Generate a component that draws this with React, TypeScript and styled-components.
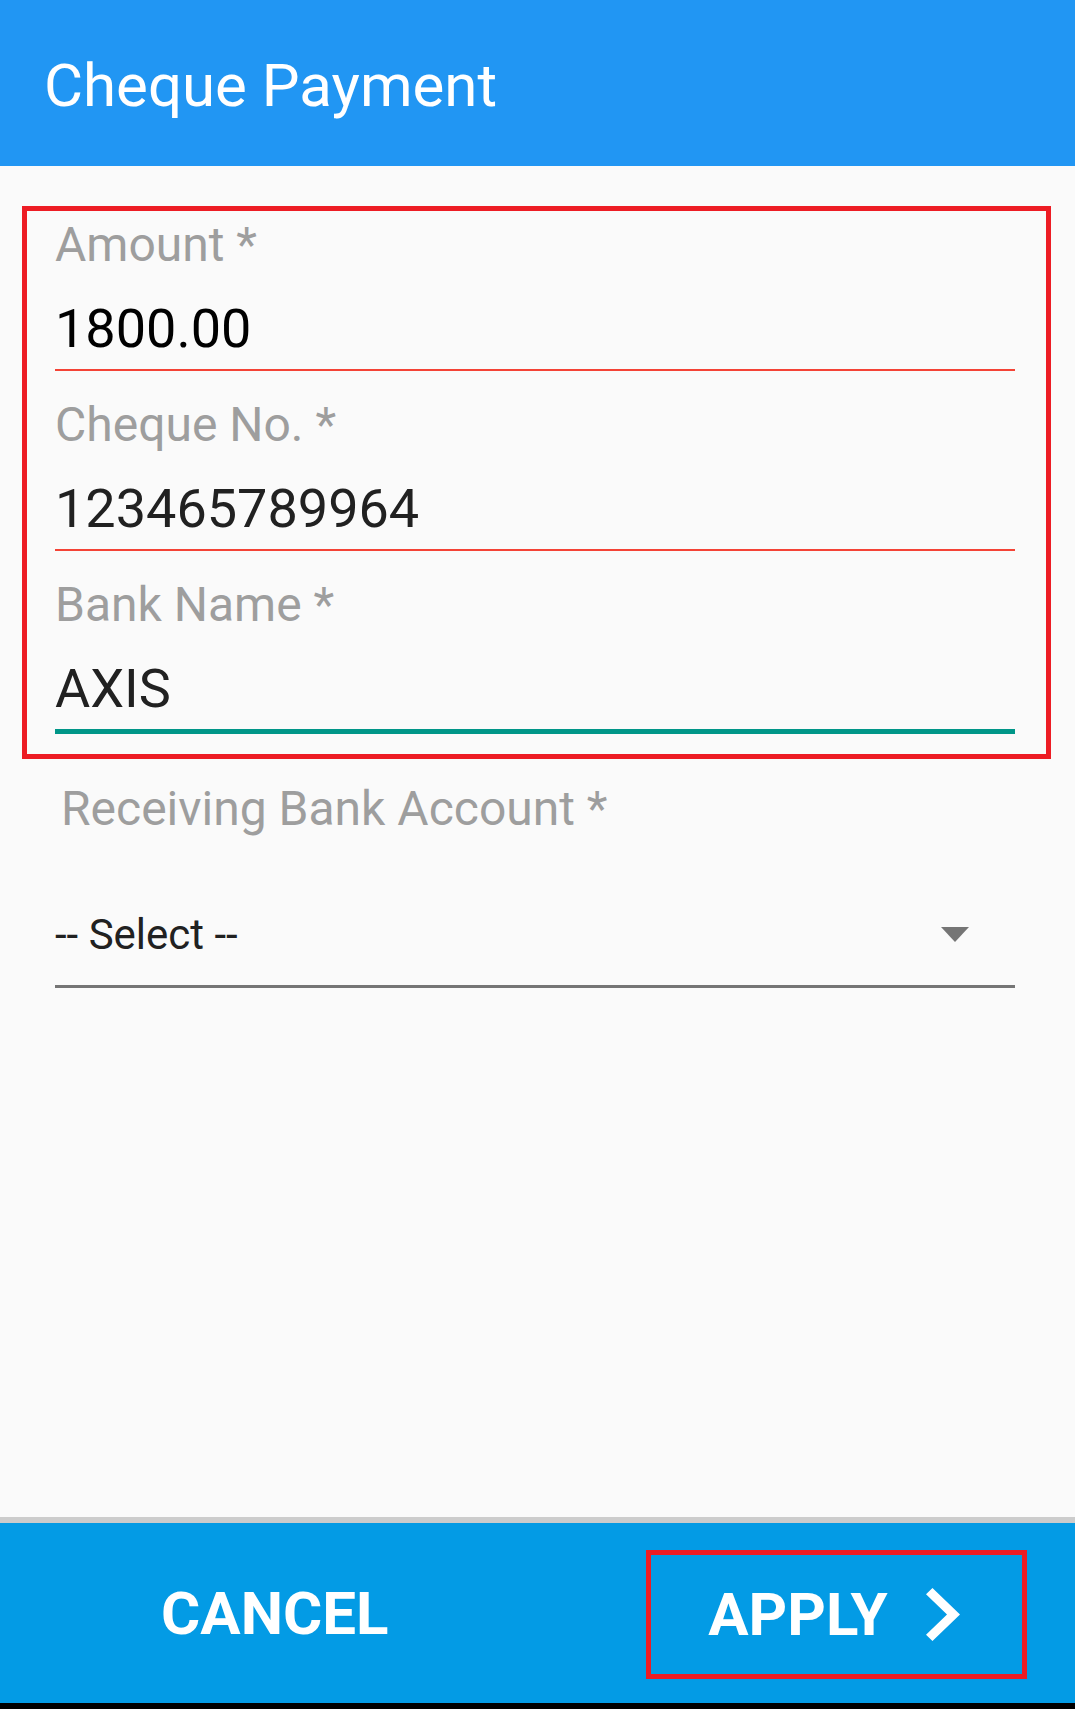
import React from "react";
import styled, { createGlobalStyle } from "styled-components";

const GlobalStyle = createGlobalStyle`
  html, body {
    margin: 0;
    padding: 0;
    background: #fafafa;
  }
  body {
    font-family: Roboto, "Noto Sans", "Liberation Sans", sans-serif;
  }
`;

const Screen = styled.div`
  display: flex;
  flex-direction: column;
  height: 1709px;
  background: #fafafa;
`;

const Header = styled.header`
  display: flex;
  align-items: center;
  height: 166px;
  padding: 5px 0 0 44px;
  box-sizing: border-box;
  background: #2196f3;
  color: #ffffff;
  font-size: 60px;
  line-height: 70px;
`;

const Body = styled.main`
  flex: 1;
  padding-top: 40px;
`;

const Highlight = styled.section`
  display: flex;
  flex-direction: column;
  gap: 20px;
  margin: 0 24px 0 22px;
  padding: 0 31px 20px 28px;
  border: 5px solid #ed1c24;
`;

const Field = styled.div`
  display: flex;
  flex-direction: column;
  padding-top: 6px;
`;

const Label = styled.label`
  font-size: 48px;
  line-height: 56px;
  color: #9e9e9e;
`;

const Value = styled.div<{ $dark?: boolean }>`
  margin-top: 24px;
  font-size: 54px;
  line-height: 64px;
  color: ${({ $dark }) => ($dark ? "#000000" : "#212121")};
`;

const Underline = styled.div<{ $focused?: boolean }>`
  margin-top: 8px;
  height: ${({ $focused }) => ($focused ? "5px" : "2px")};
  background: ${({ $focused }) => ($focused ? "#009688" : "#f44336")};
`;

const SelectSection = styled.section`
  display: flex;
  flex-direction: column;
  padding: 22px 60px 0 55px;
`;

const SelectLabel = styled(Label)`
  margin-left: 6px;
`;

const SelectRow = styled.div`
  display: flex;
  align-items: center;
  justify-content: space-between;
  height: 90px;
  margin-top: 52px;
  padding-right: 46px;
  font-size: 42px;
  color: #212121;
`;

const Caret = styled.span`
  width: 0;
  height: 0;
  border-left: 14.5px solid transparent;
  border-right: 14.5px solid transparent;
  border-top: 15px solid #757575;
`;

const SelectLine = styled.div`
  margin-top: 6px;
  height: 3px;
  background: #757575;
`;

const Divider = styled.div`
  height: 6px;
  background: #cccccc;
`;

const BottomBar = styled.footer`
  display: grid;
  grid-template-columns: 1fr 1fr;
  align-items: center;
  height: 180px;
  background: #039be5;
`;

const ActionButton = styled.button<{ $outlined?: boolean }>`
  display: flex;
  align-items: center;
  justify-content: center;
  gap: 38px;
  box-sizing: border-box;
  height: 129px;
  padding: ${({ $outlined }) => ($outlined ? "0 5px 0 0" : "0 0 0 12px")};
  border: ${({ $outlined }) => ($outlined ? "5px solid #ed1c24" : "none")};
  width: ${({ $outlined }) => ($outlined ? "381px" : "auto")};
  margin: ${({ $outlined }) => ($outlined ? "2px 48px 0 auto" : "0")};
  background: transparent;
  color: #ffffff;
  font-family: Roboto, "Liberation Sans", sans-serif;
  font-size: 60px;
  font-weight: 700;
  cursor: pointer;
`;

const NavStrip = styled.div`
  height: 6px;
  background: #000000;
`;

const Chevron = () => (
  <svg width="34" height="53" viewBox="8.59 6 7.41 12" preserveAspectRatio="none">
    <path d="M10 6L8.59 7.41 13.17 12l-4.58 4.59L10 18l6-6z" fill="#ffffff" />
  </svg>
);

const fields = [
  { label: "Amount *", value: "1800.00", dark: true },
  { label: "Cheque No. *", value: "123465789964" },
  { label: "Bank Name *", value: "AXIS", focused: true },
];

export default function App() {
  return (
    <Screen>
      <GlobalStyle />
      <Header>Cheque Payment</Header>
      <Body>
        <Highlight>
          {fields.map((f) => (
            <Field key={f.label}>
              <Label>{f.label}</Label>
              <Value $dark={f.dark}>{f.value}</Value>
              <Underline $focused={f.focused} />
            </Field>
          ))}
        </Highlight>
        <SelectSection>
          <SelectLabel>Receiving Bank Account *</SelectLabel>
          <SelectRow>
            <span>-- Select --</span>
            <Caret />
          </SelectRow>
          <SelectLine />
        </SelectSection>
      </Body>
      <Divider />
      <BottomBar>
        <ActionButton>CANCEL</ActionButton>
        <ActionButton $outlined>
          APPLY
          <Chevron />
        </ActionButton>
      </BottomBar>
      <NavStrip />
    </Screen>
  );
}
